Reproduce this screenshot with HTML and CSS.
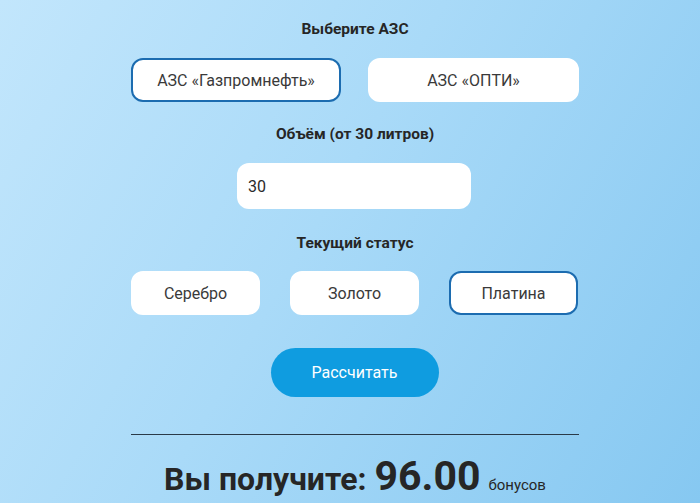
FILE: index.html
```html
<!DOCTYPE html>
<html lang="ru">
<head>
<meta charset="utf-8">
<link rel="stylesheet" href="styles.css">
</head>
<body>
<main class="calc">
  <section class="group">
    <h2 class="title">Выберите АЗС</h2>
    <div class="row row-2">
      <button class="opt selected">АЗС «Газпромнефть»</button>
      <button class="opt">АЗС «ОПТИ»</button>
    </div>
  </section>
  <section class="group">
    <h2 class="title">Объём (от 30 литров)</h2>
    <div class="input-wrap">
      <input class="volume" type="text" value="30">
    </div>
  </section>
  <section class="group group-status">
    <h2 class="title">Текущий статус</h2>
    <div class="row row-3">
      <button class="opt">Серебро</button>
      <button class="opt">Золото</button>
      <button class="opt selected">Платина</button>
    </div>
  </section>
  <div class="action">
    <button class="calc-btn">Рассчитать</button>
  </div>
  <hr class="divider">
  <p class="result">Вы получите: <span class="amount">96.00</span> <span class="unit">бонусов</span></p>
</main>
</body>
</html>
```
FILE: styles.css
```css
html, body {
  margin: 0;
  height: 100%;
}
body {
  background: linear-gradient(120deg, #c2e6fc 0%, #a9daf8 45%, #86c8f1 100%);
  font-family: Roboto, "Noto Sans", sans-serif;
  color: #2a2a2a;
  overflow: hidden;
}
.calc {
  width: 448px;
  margin: 0 auto;
  padding: 19px 0 0 10px;
  display: flex;
  flex-direction: column;
}
.group {
  display: flex;
  flex-direction: column;
  align-items: center;
  margin-bottom: 22px;
}
.title {
  margin: 0 0 19px;
  font-size: 15.5px;
  line-height: 20px;
  font-weight: 700;
  color: #262626;
}
.row {
  display: grid;
  width: 100%;
}
.row-2 {
  grid-template-columns: 210px 211px;
  justify-content: space-between;
}
.row-3 {
  grid-template-columns: repeat(3, 129px);
  column-gap: 30px;
  justify-content: start;
}
.opt {
  height: 44px;
  border: 2px solid #fff;
  border-radius: 12px;
  background: #fff;
  font-family: Roboto, "Noto Sans", sans-serif;
  font-size: 16px;
  color: #3a3a3a;
  padding: 0;
}
.opt.selected {
  border-color: #1c6cb0;
}
.input-wrap {
  width: 234px;
  margin-left: -2px;
}
.volume {
  box-sizing: border-box;
  width: 100%;
  height: 46px;
  border: none;
  border-radius: 12px;
  background: #fff;
  padding: 0 11px;
  font-family: Roboto, "Noto Sans", sans-serif;
  font-size: 16px;
  color: #2a2a2a;
  outline: none;
}
.group-status {
  margin-top: 2px;
}
.title + .row-3 {
  margin-top: -1px;
}
.action {
  display: flex;
  justify-content: center;
  margin-top: 11px;
}
.calc-btn {
  width: 168px;
  height: 49px;
  border: none;
  border-radius: 25px;
  background: #0f9ce0;
  color: #fff;
  font-family: Roboto, "Noto Sans", sans-serif;
  font-size: 16px;
  margin-left: -1px;
}
.divider {
  width: 100%;
  margin: 37px 0 0;
  border: none;
  border-top: 1px solid #2a3a48;
  height: 0;
}
.result {
  margin: 21px 0 0;
  text-align: center;
  font-weight: 700;
  font-size: 32px;
  line-height: 40px;
  color: #262626;
  white-space: nowrap;
}
.amount {
  font-size: 41px;
}
.unit {
  font-size: 15px;
  font-weight: 400;
}
```
